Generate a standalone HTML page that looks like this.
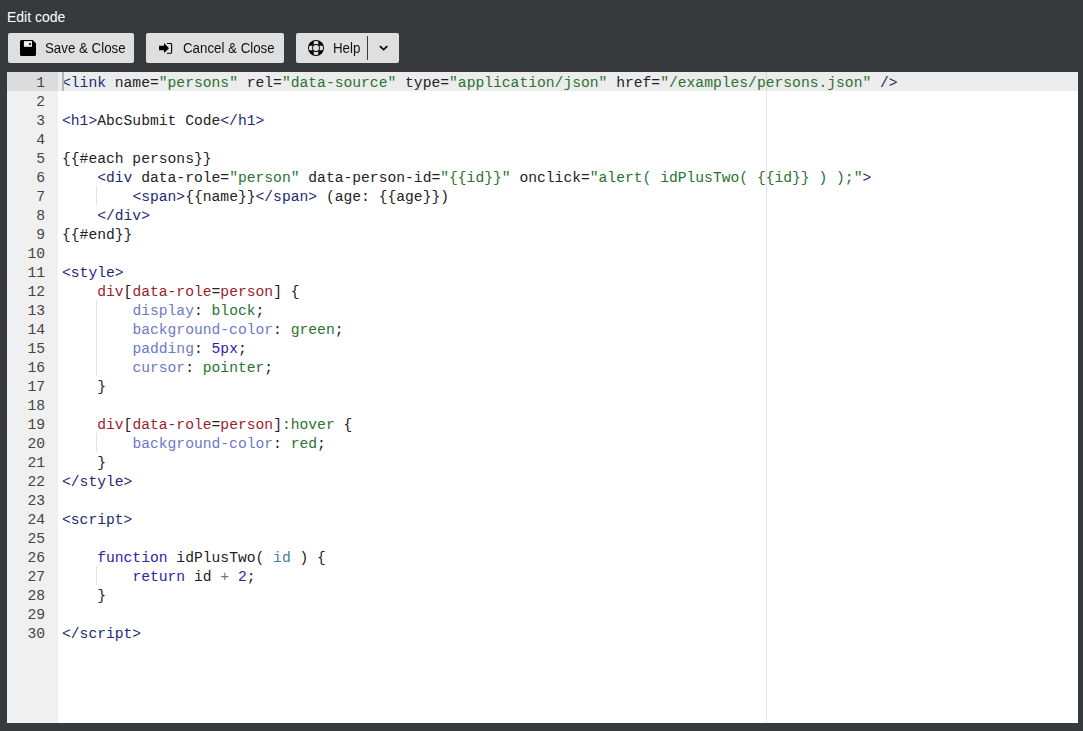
<!DOCTYPE html>
<html><head><meta charset="utf-8">
<style>
html,body{margin:0;padding:0;}
body{width:1083px;height:731px;overflow:hidden;background:#363a3c;position:relative;font-family:"Liberation Sans",sans-serif;}
.title{position:absolute;left:7px;top:8px;color:#fff;font-size:14px;line-height:18px;white-space:nowrap;}
.btn{position:absolute;top:33px;height:30px;background:#dfdfdf;border-radius:2px;color:#111;font-size:13.5px;}
.btn .lbl{position:absolute;top:6px;line-height:18px;white-space:nowrap;font-size:14px;transform:scaleX(0.95);transform-origin:0 0;}
.btn svg{position:absolute;}
#save{left:8px;width:126px;}
#cancel{left:146px;width:138px;}
#help{left:296px;width:103px;}
.sep{position:absolute;left:71px;top:3px;width:1px;height:24px;background:#3a3a3a;}
.editor{position:absolute;left:7px;top:72px;width:1071px;height:651px;background:#fff;overflow:hidden;}
.gutter{position:absolute;left:0;top:0;width:51px;height:651px;background:#f0f0f0;}
.gl{position:absolute;left:0;width:51px;height:19px;}
.gl span{position:absolute;right:13px;top:0;}
.code{position:absolute;left:51px;top:0;right:0;height:651px;}
.active{position:absolute;left:0;right:0;top:0;height:19px;background:rgba(0,0,0,0.075);}
.gact{position:absolute;left:0;top:0;width:51px;height:19px;background:#dcdcdc;}
.margin{position:absolute;left:708px;top:0;width:1px;height:651px;background:#e8e8e8;}
.guide{position:absolute;left:38px;width:1px;height:19px;background:#e2e2e2;}
.mono{font-family:"Liberation Mono",monospace;font-size:14.667px;line-height:19px;}
.line{position:absolute;left:4px;height:19px;white-space:pre;color:#222;}
.num{color:#444;}
.cursor{position:absolute;left:4px;top:0;width:2px;height:19px;background:#b4b4b4;}
.t{color:#1d2a72;}
.s{color:#28732f;}
.p{color:#6d79c8;}
.k{color:#2626a6;}
.sel{color:#9b1c2c;}
.n{color:#2a22a8;}
.v{color:#43809a;}
.o{color:#687687;}
</style></head><body>
<div class="title">Edit code</div>

<div class="btn" id="save">
<svg style="left:12px;top:7px" width="16" height="16" viewBox="0 0 16 16"><path d="M1.5 0H12.7L16 3.3V14.5A1.5 1.5 0 0 1 14.5 16H1.5A1.5 1.5 0 0 1 0 14.5V1.5A1.5 1.5 0 0 1 1.5 0Z" fill="#000"/><rect x="3.9" y="1.1" width="8.1" height="5.7" fill="#f0f0f0"/><circle cx="10" cy="4.1" r="1.1" fill="#000"/></svg>
<span class="lbl" style="left:37px">Save &amp; Close</span>
</div>

<div class="btn" id="cancel">
<svg style="left:12px;top:10px" width="16" height="12" viewBox="0 0 16 12"><path d="M1 2.8H6V0.1L11 5.2L6 10V7.2H1Z" fill="#000"/><path d="M9 0.5H12.6Q13.6 0.5 13.6 1.5V9.2Q13.6 10.2 12.6 10.2H9" fill="none" stroke="#000" stroke-width="1.1"/></svg>
<span class="lbl" style="left:37px">Cancel &amp; Close</span>
</div>

<div class="btn" id="help">
<svg style="left:12px;top:7px" width="16" height="16" viewBox="-8 -8 16 16"><defs><mask id="lbm"><circle r="7.1" fill="#fff"/><circle r="3.9" fill="#000"/></mask></defs><circle r="8" fill="#000"/><g mask="url(#lbm)" fill="#dfdfdf"><rect x="-2.3" y="-8" width="4.6" height="16"/><rect x="-8" y="-2.3" width="16" height="4.6"/></g><circle r="3" fill="#dfdfdf"/></svg>
<span class="lbl" style="left:37px">Help</span>
<div class="sep"></div>
<svg style="left:82px;top:11px" width="10" height="8" viewBox="0 0 10 8"><path d="M1.9 2.2L5.6 5.7L9.3 2.2" fill="none" stroke="#000" stroke-width="1.6"/></svg>
</div>

<div class="editor mono">
<div class="gutter">
<div class="gact"></div>
<div id="gnums" style="position:absolute;left:0;top:2px;width:51px">
<div class="gl" style="top:0px"><span class="num">1</span></div>
<div class="gl" style="top:19px"><span class="num">2</span></div>
<div class="gl" style="top:38px"><span class="num">3</span></div>
<div class="gl" style="top:57px"><span class="num">4</span></div>
<div class="gl" style="top:76px"><span class="num">5</span></div>
<div class="gl" style="top:95px"><span class="num">6</span></div>
<div class="gl" style="top:114px"><span class="num">7</span></div>
<div class="gl" style="top:133px"><span class="num">8</span></div>
<div class="gl" style="top:152px"><span class="num">9</span></div>
<div class="gl" style="top:171px"><span class="num">10</span></div>
<div class="gl" style="top:190px"><span class="num">11</span></div>
<div class="gl" style="top:209px"><span class="num">12</span></div>
<div class="gl" style="top:228px"><span class="num">13</span></div>
<div class="gl" style="top:247px"><span class="num">14</span></div>
<div class="gl" style="top:266px"><span class="num">15</span></div>
<div class="gl" style="top:285px"><span class="num">16</span></div>
<div class="gl" style="top:304px"><span class="num">17</span></div>
<div class="gl" style="top:323px"><span class="num">18</span></div>
<div class="gl" style="top:342px"><span class="num">19</span></div>
<div class="gl" style="top:361px"><span class="num">20</span></div>
<div class="gl" style="top:380px"><span class="num">21</span></div>
<div class="gl" style="top:399px"><span class="num">22</span></div>
<div class="gl" style="top:418px"><span class="num">23</span></div>
<div class="gl" style="top:437px"><span class="num">24</span></div>
<div class="gl" style="top:456px"><span class="num">25</span></div>
<div class="gl" style="top:475px"><span class="num">26</span></div>
<div class="gl" style="top:494px"><span class="num">27</span></div>
<div class="gl" style="top:513px"><span class="num">28</span></div>
<div class="gl" style="top:532px"><span class="num">29</span></div>
<div class="gl" style="top:551px"><span class="num">30</span></div>
</div>
</div>
<div class="code">
<div class="margin"></div>
<div class="active"></div>
<div class="guide" style="top:114px"></div><div class="guide" style="top:228px"></div><div class="guide" style="top:247px"></div><div class="guide" style="top:266px"></div><div class="guide" style="top:285px"></div><div class="guide" style="top:361px"></div><div class="guide" style="top:494px"></div>
<div id="lines" style="position:absolute;left:0;top:2px;width:100%">
<div class="line" style="top:0px"><span class="t">&lt;link</span> name=<span class="s">"persons"</span> rel=<span class="s">"data-source"</span> type=<span class="s">"application/json"</span> href=<span class="s">"/examples/persons.json"</span> <span class="t">/&gt;</span></div>
<div class="line" style="top:19px"></div>
<div class="line" style="top:38px"><span class="t">&lt;h1&gt;</span>AbcSubmit Code<span class="t">&lt;/h1&gt;</span></div>
<div class="line" style="top:57px"></div>
<div class="line" style="top:76px">{{#each persons}}</div>
<div class="line" style="top:95px">    <span class="t">&lt;div</span> data-role=<span class="s">"person"</span> data-person-id=<span class="s">"{{id}}"</span> onclick=<span class="s">"alert( idPlusTwo( {{id}} ) );"</span><span class="t">&gt;</span></div>
<div class="line" style="top:114px">        <span class="t">&lt;span&gt;</span>{{name}}<span class="t">&lt;/span&gt;</span> (age: {{age}})</div>
<div class="line" style="top:133px">    <span class="t">&lt;/div&gt;</span></div>
<div class="line" style="top:152px">{{#end}}</div>
<div class="line" style="top:171px"></div>
<div class="line" style="top:190px"><span class="t">&lt;style&gt;</span></div>
<div class="line" style="top:209px">    <span class="sel">div</span>[<span class="sel">data-role</span>=<span class="sel">person</span>] {</div>
<div class="line" style="top:228px">        <span class="p">display</span>: <span class="s">block</span>;</div>
<div class="line" style="top:247px">        <span class="p">background-color</span>: <span class="s">green</span>;</div>
<div class="line" style="top:266px">        <span class="p">padding</span>: <span class="n">5px</span>;</div>
<div class="line" style="top:285px">        <span class="p">cursor</span>: <span class="s">pointer</span>;</div>
<div class="line" style="top:304px">    }</div>
<div class="line" style="top:323px"></div>
<div class="line" style="top:342px">    <span class="sel">div</span>[<span class="sel">data-role</span>=<span class="sel">person</span>]<span class="s">:hover</span> {</div>
<div class="line" style="top:361px">        <span class="p">background-color</span>: <span class="s">red</span>;</div>
<div class="line" style="top:380px">    }</div>
<div class="line" style="top:399px"><span class="t">&lt;/style&gt;</span></div>
<div class="line" style="top:418px"></div>
<div class="line" style="top:437px"><span class="t">&lt;script&gt;</span></div>
<div class="line" style="top:456px"></div>
<div class="line" style="top:475px">    <span class="k">function</span> idPlusTwo( <span class="v">id</span> ) {</div>
<div class="line" style="top:494px">        <span class="k">return</span> id <span class="o">+</span> <span class="n">2</span>;</div>
<div class="line" style="top:513px">    }</div>
<div class="line" style="top:532px"></div>
<div class="line" style="top:551px"><span class="t">&lt;/script&gt;</span></div>
</div>
<div class="cursor"></div>
</div>
</div>
</body></html>
